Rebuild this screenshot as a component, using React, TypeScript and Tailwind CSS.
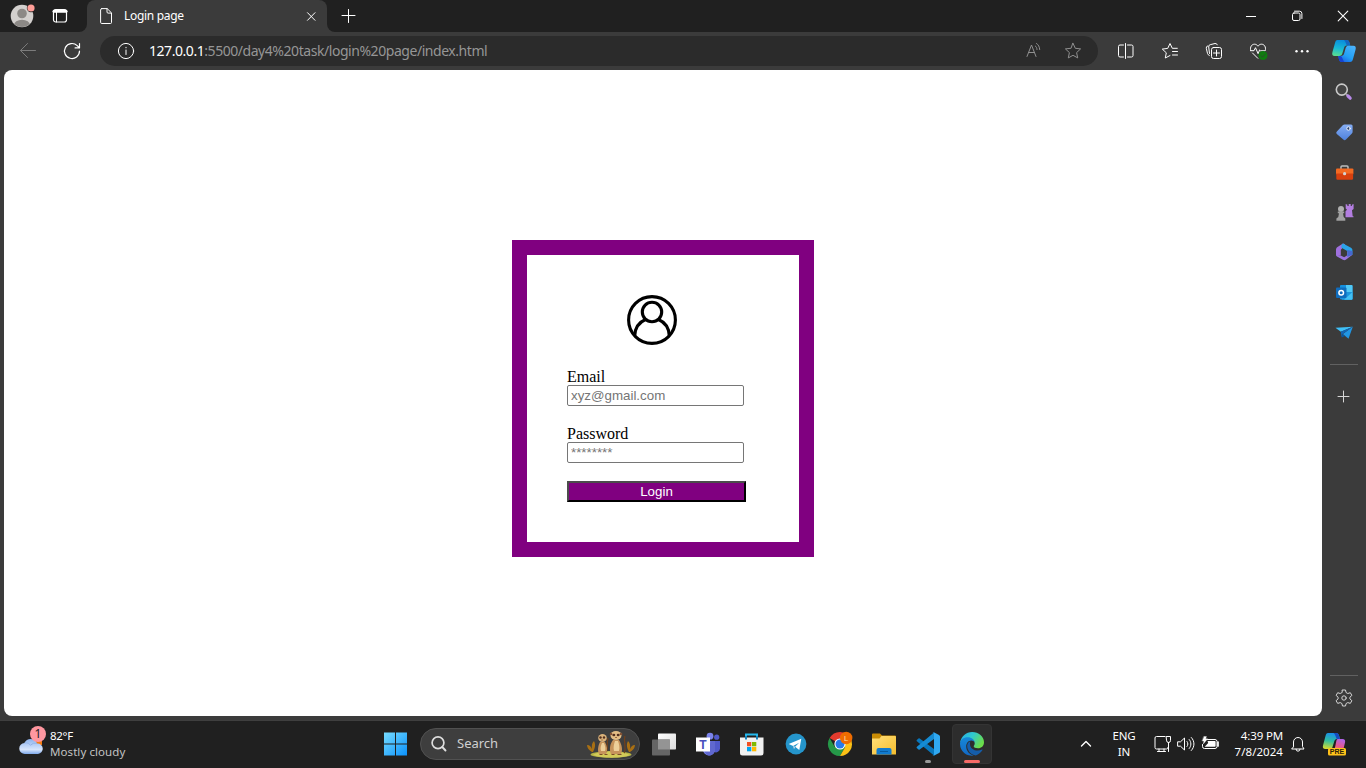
import type { ReactNode } from "react";

type IconProps = { size?: number; className?: string; children: ReactNode };

/* Line icon on a 24 unit grid, drawn at one pixel per unit by default. */
function Icon({ size = 24, className = "", children }: IconProps) {
  return (
    <svg
      width={size}
      height={size}
      viewBox="0 0 24 24"
      fill="none"
      stroke="currentColor"
      strokeWidth="1"
      strokeLinecap="round"
      strokeLinejoin="round"
      className={`block shrink-0 overflow-visible ${className}`}
    >
      {children}
    </svg>
  );
}

function Slot({ children, className = "w-11" }: { children: ReactNode; className?: string }) {
  return <div className={`flex shrink-0 items-center justify-center ${className}`}>{children}</div>;
}

function TitleBar() {
  return (
    <header className="flex h-8 shrink-0 bg-[#202020] text-white">
      <div className="flex w-[79px] shrink-0 items-center pl-[10px]">
        <Icon className="mr-[14px] mt-[-2px]">
          <g stroke="none">
            <clipPath id="avatar"><circle cx="12" cy="13" r="11" /></clipPath>
            <circle cx="12" cy="13" r="11.3" fill="#d3d0ce" />
            <g clipPath="url(#avatar)" fill="#8c8986">
              <circle cx="12" cy="10.5" r="4.8" />
              <ellipse cx="12" cy="22" rx="8" ry="5.3" />
            </g>
            <circle cx="21" cy="5" r="4.2" fill="#202020" />
            <circle cx="21" cy="5" r="3.6" fill="#ff9e98" />
          </g>
        </Icon>
        <Icon>
          <rect x="5.5" y="5.5" width="13" height="12.5" rx="2.2" strokeWidth="1.2" />
          <path d="M6 7.3h12" strokeWidth="3" />
          <path d="M8.5 8v10" />
        </Icon>
      </div>
      <div className="flex w-2 shrink-0 items-end bg-[#3b3b3b]">
        <div className="h-8 w-2 rounded-br-lg bg-[#202020]" />
      </div>
      <div className="shrink-0 bg-[#202020]">
        <div className="flex h-8 w-60 items-center rounded-t-lg bg-[#3b3b3b] pl-[7px]">
          <Icon>
            <path d="M7.8 4.6h5.4l4.3 4.3v9.6a1 1 0 0 1-1 1H7.8a1.2 1.2 0 0 1-1.2-1.2V5.8a1.2 1.2 0 0 1 1.2-1.2Z" />
            <path d="M13 4.8V8a1.1 1.1 0 0 0 1.1 1.1h3.2" />
          </Icon>
          <span className="ml-[6px] w-[175px] whitespace-nowrap font-['Noto_Sans',sans-serif] text-[12px] tracking-[-0.31px]">Login page</span>
          <Icon>
            <path d="m8.5 8.700 7.500 7.600m0-7.600-7.500 7.600" />
          </Icon>
        </div>
      </div>
      <div className="w-2 shrink-0 bg-[#3b3b3b]">
        <div className="h-8 w-2 rounded-bl-lg bg-[#202020]" />
      </div>
      <div className="flex flex-1 items-center pl-px">
        <Icon>
          <path d="M12.500 5.500v13M6 11.500h13" />
        </Icon>
      </div>
      <Slot className="w-[46px]">
        <Icon><path d="M7 12.500h10" strokeLinecap="butt" /></Icon>
      </Slot>
      <Slot className="w-[46px]">
        <Icon>
          <rect x="7.500" y="9" width="7.500" height="7.500" rx="1.500" />
          <path d="M9.500 7.200h5a2.400 2.400 0 0 1 2.400 2.400v4.900" />
        </Icon>
      </Slot>
      <Slot className="w-[46px]">
        <Icon><path d="m7.200 7.200 9.600 9.600m0-9.600-9.600 9.600" strokeWidth="1.100" /></Icon>
      </Slot>
    </header>
  );
}

const star = "m12 4.300 2.300 5 5.300.6-4 3.700 1.100 5.300L12 16.300l-4.700 2.600 1.100-5.300-4-3.700 5.300-.6Z";

function CopilotLogo() {
  return (
    <svg width="26" height="24" viewBox="0 0 26 24" className="block">
      <defs>
        <linearGradient id="cpA" x1="0.3" y1="0" x2="0.1" y2="1">
          <stop stopColor="#0a8fdc" /><stop offset=".5" stopColor="#19b9d4" /><stop offset="1" stopColor="#5fe08a" />
        </linearGradient>
        <linearGradient id="cpB" x1="0.8" y1="0" x2="0.2" y2="1">
          <stop stopColor="#4ab2fb" /><stop offset=".6" stopColor="#22a0f5" /><stop offset="1" stopColor="#1c5fe5" />
        </linearGradient>
      </defs>
      <path d="M6.500 1h9c2 0 2.600 1.200 3 2.700l.8 2.900h-3.500c-1.700 0-2.400 1-2.800 2.400l-1.600 5.300c-.5 1.700-1.400 2.700-3.200 2.700H3.700c-2.300 0-2.900-1.500-2.300-3.700L4 4c.5-2 1-3 2.500-3Z" fill="url(#cpA)" />
      <path d="M13 1h2.500c2 0 2.600 1.200 3 2.700l.8 2.900h-3.500c-1-2-1-4-2.800-5.600Z" fill="#1565c0" />
      <path d="M17 6.800h5.300c2.300 0 2.900 1.500 2.300 3.700L22 20c-.5 2-1.200 3-3 3h-8c-2 0-2.600-1-3-2.500l-.7-3.500h2.500c2 0 2.900-1 3.400-2.700l1.300-4.700c.4-1.400 1-2.800 2.500-2.800Z" fill="url(#cpB)" />
      <path d="M7.300 17h2.500c1 0 2 4 3.700 6H11c-2 0-2.600-1-3-2.500Z" fill="#1743d2" />
    </svg>
  );
}

function Toolbar() {
  return (
    <div className="flex h-[38px] shrink-0 items-center bg-[#3b3b3b] text-white">
      <div className="flex w-[100px] shrink-0 pl-4">
        <Icon className="text-[#7c7c7c]">
          <path d="M4.500 11.500H19.500M11.500 4.500l-7 7 7 7" />
        </Icon>
        <Icon className="ml-5">
          <path d="M19.500 12a7.500 7.500 0 1 1-2.300-5.400l2 2M19.500 4.500v4.400h-4.400" strokeWidth="1.200" />
        </Icon>
      </div>
      <div className="flex h-[30px] w-[998px] shrink-0 items-center rounded-full bg-[#2b2b2b] pl-[14px]">
        <Icon>
          <circle cx="12" cy="12" r="7.600" />
          <path d="M12 11v4.500M12 8.300v.5" />
        </Icon>
        <span className="ml-[11px] mt-[-1px] flex-1 whitespace-nowrap font-['Noto_Sans',sans-serif] text-[14px] tracking-[-0.45px] text-[#969696]">
          <span className="text-white">127.0.0.1</span>:5500/day4%20task/login%20page/index.html
        </span>
        <Icon className="text-[#8f8f8f]">
          <path d="m6 17.500 4.500-11.500L15 17.500M7.500 13.500h6M14.300 7c1 .7 1.600 1.900 1.700 3.500M15.500 4.500c2 1.300 3 3.200 3.200 6" />
        </Icon>
        <Icon className="ml-4 mr-[13px] text-[#8f8f8f]"><path d={star} /></Icon>
      </div>
      <div className="flex pl-[6px]">
        <Slot>
          <Icon>
            <path d="M9.500 6H6a1.500 1.500 0 0 0-1.500 1.500v9A1.500 1.500 0 0 0 6 18h3.500M13.500 6h4A1.500 1.500 0 0 1 19 7.500v9a1.500 1.500 0 0 1-1.500 1.500h-4M11.500 4.500v15" />
          </Icon>
        </Slot>
        <Slot>
          <Icon>
            <path d="M12 16.500 7.300 19l1-5.200-4-3.700 5.400-.7L12 4.500l2.300 4.800h5M14.500 12.500h5M14.500 16h5" />
          </Icon>
        </Slot>
        <Slot>
          <Icon>
            <rect x="9.500" y="8.500" width="10" height="11" rx="2" />
            <path d="M14.500 11v6M11.500 14h6M7.300 16.500A3 3 0 0 1 5.500 14.500L4.300 9.300a2 2 0 0 1 1.400-2.400M7.500 14.500l-.8-6.500a2 2 0 0 1 1.500-2.300l4.800-1.200a2 2 0 0 1 2.300 1.300" />
          </Icon>
        </Slot>
        <Slot>
          <Icon>
            <path d="M4.700 11.500c-1-3.500 1-6.300 3.800-6.300 1.600 0 2.700.9 3.500 2 .8-1.100 1.900-2 3.500-2 2.800 0 4.800 2.800 3.800 6.300M4.500 11.700H8l1.500-3 2.600 6 1.500-3.800 1 .9h4M6.500 14l5.300 5.300" />
            <circle cx="17" cy="16.500" r="4.500" fill="#107c10" stroke="none" />
            <path d="m15 16.700 1.500 1.400 2.700-3" stroke="#2f4b2f" strokeWidth="1" />
          </Icon>
        </Slot>
        <Slot>
          <Icon>
            <g fill="currentColor" stroke="none"><circle cx="6.500" cy="12.300" r="1.200" /><circle cx="12" cy="12.300" r="1.200" /><circle cx="17.500" cy="12.300" r="1.200" /></g>
          </Icon>
        </Slot>
        <Slot className="w-10"><CopilotLogo /></Slot>
      </div>
    </div>
  );
}

function LoginCard() {
  return (
    <form className="mt-[170px] h-[317px] w-[302px] border-[15px] border-[#800080] bg-white p-10 text-black">
      <svg width="50" height="50" viewBox="0 0 50 50" fill="none" stroke="#000" strokeWidth="3.100" className="ml-[60px] block">
        <circle cx="25" cy="25" r="23.400" />
        <circle cx="25" cy="17" r="9.700" />
        <path d="M7.700 41c.2-8 3.800-13.500 10.800-16.500M42.300 41c-.2-8-3.800-13.500-10.800-16.500" />
      </svg>
      <div className="mt-[22px] flex flex-col font-['Liberation_Serif',serif] text-[16px] leading-[18px]">
        <label htmlFor="email" className="h-[18px] leading-[19px]">Email</label>
        <input
          id="email"
          type="text"
          placeholder="xyz@gmail.com"
          className="h-[21px] w-[177px] rounded-[2px] border border-[#767676] px-[3px] font-['Liberation_Sans',sans-serif] text-[13.333px] leading-[15px] placeholder:text-[#757575]"
        />
        <label htmlFor="password" className="mt-[18px] h-[18px] leading-[19px]">Password</label>
        <input
          id="password"
          type="password"
          placeholder="********"
          className="h-[21px] w-[177px] rounded-[2px] border border-[#767676] px-[3px] pb-px font-['Liberation_Sans',sans-serif] text-[13.333px] leading-[15px] placeholder:text-[#757575]"
        />
        <button
          type="button"
          className="mt-[18px] h-[21px] w-[179px] border-2 border-b-black border-l-[#4c4c4c] border-r-black border-t-[#4c4c4c] bg-[#800080] text-center font-['Liberation_Sans',sans-serif] text-[13.333px] leading-[17px] text-white"
        >
          Login
        </button>
      </div>
    </form>
  );
}

function Sidebar() {
  return (
    <aside className="flex w-11 shrink-0 flex-col items-center bg-[#3b3b3b] pt-[2px] text-[#d6d6d6]">
      <Slot className="h-10">
        <Icon>
          <circle cx="9.800" cy="9.600" r="5.500" stroke="#c9c9c9" strokeWidth="1.600" fill="#444" />
          <path d="m14.500 14.500 1.500 1.500" stroke="#a4a4a4" strokeWidth="1.800" />
          <path d="m16 16 2.200 2.200" stroke="#b78ae8" strokeWidth="3.200" />
        </Icon>
      </Slot>
      <Slot className="h-10">
        <Icon>
          <defs><linearGradient id="tag" x1="0" y1="0" x2="0" y2="1"><stop stopColor="#85adf3" /><stop offset="1" stopColor="#4f82dd" /></linearGradient></defs>
          <path d="M12.500 4.500h6.600a1.500 1.500 0 0 1 1.500 1.500v6.100c0 .6-.3 1-.7 1.400L14 19.500a1.900 1.900 0 0 1-2.700 0l-6.500-5.400a1.700 1.700 0 0 1 .1-2.500L11 5.100c.4-.4.900-.6 1.500-.6Z" fill="url(#tag)" stroke="none" />
          <circle cx="16.500" cy="8.500" r="1.700" fill="#253e70" stroke="#fff" strokeWidth=".9" />
        </Icon>
      </Slot>
      <Slot className="h-10">
        <Icon>
          <path d="M9 8.500V7a1 1 0 0 1 1-1h5a1 1 0 0 1 1 1v1.500" stroke="#bdbdbd" strokeWidth="1.500" />
          <g stroke="none">
            <rect x="4" y="8.500" width="17.400" height="6" rx="1" fill="#f36a22" />
            <path d="M4.300 13.500h16.800V18.500a1.200 1.200 0 0 1-1.200 1.200H5.500a1.200 1.200 0 0 1-1.200-1.200Z" fill="#d8400e" />
            <circle cx="12.600" cy="13.700" r="1.600" fill="#d5d5d5" />
          </g>
        </Icon>
      </Slot>
      <Slot className="h-10">
        <Icon>
          <g stroke="none">
            <path d="m13.700 4 1.700.7V6h1.300V4h2v2h1.200V4.700l1.700-.7v5l-1.600 1.200.7 6h.8v1h-8v-6l1.500-1.500-1.300-1.200Z" fill="#b37ee0" />
            <circle cx="9" cy="9" r="3" fill="#b0b0b0" />
            <path d="M5.800 11.500h6.400v1.700H11l.7 3.800 1.600 1.500v2.200H4.400v-2.200L6.300 17l.7-3.800H5.800Z" fill="#a0a0a0" />
          </g>
        </Icon>
      </Slot>
      <Slot className="h-10">
        <Icon>
          <g stroke="none">
            <path d="M11 3.500 5.500 7C4.500 7.700 4 8.600 4 9.800v5c1 1.200 3 1.600 4.800.7V10l4.400-5.800Z" fill="#a070de" />
            <path d="m11 3.500 8 4.300c.8.500 1.400 1.300 1.400 2.300v4.700l-5.100 2.200v-6L9.500 7.700c-.5-1.500.2-3.500 1.500-4.200Z" fill="#2aa4e9" />
            <path d="m20.400 14.800-6.600 5c-.9.600-2 .6-2.900 0L5 16.500c-1-.7-1-1.200-1-2 1.500 1.500 3 1.700 4.800 1l3.400 1.700 3.100-2v-3.500c3 .7 4 1.600 5.100 3.100Z" fill="#9a74e0" />
            <path d="m15.300 10 5.100 1v3.800l-5.100 2.200Z" fill="#4668cf" />
          </g>
        </Icon>
      </Slot>
      <Slot className="h-10">
        <Icon>
          <g stroke="none">
            <rect x="8" y="5" width="12.500" height="14.500" rx="1" fill="#1490df" />
            <path d="M14 5h5.500a1 1 0 0 1 1 1v6H14Z" fill="#50c8f5" />
            <path d="M10 12h10.500v6.800a1 1 0 0 1-1 1H10Z" fill="#1c95dc" />
            <path d="m20.500 12-8.500 7.800h7.500a1 1 0 0 0 1-1Z" fill="#42c0f3" />
            <rect x="4" y="7.500" width="10.500" height="10.500" rx="1" fill="#0f6cbd" />
          </g>
          <circle cx="9.200" cy="12.700" r="2.300" stroke="#fff" strokeWidth="1.500" />
        </Icon>
      </Slot>
      <Slot className="h-10">
        <Icon>
          <g stroke="none">
            <path d="m3.500 7.700 17.300-.9-12 5Z" fill="#3fc0f8" />
            <path d="m20.800 6.800-4.300 12-5.700-4.800Z" fill="#2196e3" />
            <path d="M8.800 11.800 20.800 6.800 10.500 14l-.8 3.500Z" fill="#1166b8" />
            <path d="m10.500 14 2.500 1.900-3.300 1.600Z" fill="#0758a4" />
          </g>
        </Icon>
      </Slot>
      <div className="mt-3 h-px w-7 shrink-0 bg-[#616161]" />
      <Slot className="mt-3 h-10">
        <Icon><path d="M11.500 6v11M6 11.500h11" /></Icon>
      </Slot>
      <div className="mt-auto h-px w-7 shrink-0 bg-[#616161]" />
      <Slot className="h-[44px]">
        <Icon>
          <path d="M10.500 4h3l.6 2.600 1.700.9 2.500-.8 1.600 2.700-2 1.800v1.700l2 1.800-1.600 2.700-2.500-.8-1.700.9-.6 2.500h-3l-.6-2.500-1.700-.9-2.500.8-1.600-2.700 2-1.800v-1.700l-2-1.800 1.600-2.700 2.500.8 1.700-.9Z" />
          <circle cx="12" cy="12" r="2.200" />
        </Icon>
      </Slot>
    </aside>
  );
}

function Meerkats() {
  return (
    <svg width="50" height="28" viewBox="0 0 50 28" className="block">
      <ellipse cx="25" cy="24.500" rx="20.500" ry="3.300" fill="#b6b545" />
      <path d="M7 25c8-5 26-5 37 0-8 3.500-28 3.500-37 0Z" fill="#d2ca59" />
      <path d="M6 22C3 20 1 18 1 15c3 0 4 2 5 4-.5-4 0-6 2-8 2 4 1 7-1 11ZM44 22c3-2 5-4 5-7-3 0-4 2-5 4 .5-4 0-6-2-8-2 4-1 7 1 11Z" fill="#a86f13" />
      <path d="M20 22c3-3 0-9 2-14M38 23c3-4-1-12 1-17" stroke="#70411d" strokeWidth="1.300" fill="none" />
      <path d="M13 24c-2-4-.5-9 1-12h5c2 4 3 8 1 12ZM25 24c-2-5-1-10 2-14h6c3 5 4 10 2 14Z" fill="#c6935b" />
      <path d="M15 21c-1-3 0-6 1-8h2c1 3 2 5 1 8ZM28 21c-1-4 0-7 1-10h3c1 3 2 6 1 10Z" fill="#edcf99" />
      <ellipse cx="16.500" cy="8" rx="4.300" ry="4" fill="#dab27b" />
      <ellipse cx="30" cy="5.500" rx="5.500" ry="4.500" fill="#e3bd85" />
      <circle cx="25" cy="4" r="1.300" fill="#845234" /><circle cx="35" cy="4" r="1.300" fill="#845234" />
      <ellipse cx="27.800" cy="5" rx="1.500" ry="1.200" fill="#53301f" /><ellipse cx="32.200" cy="5" rx="1.500" ry="1.200" fill="#53301f" />
      <circle cx="14.500" cy="7.500" r="1.200" fill="#53301f" /><circle cx="18" cy="7.500" r="1.200" fill="#53301f" />
      <path d="M29.300 7.500h1.500M15.500 10h1M13.500 24.500h3m2 0h3M25.500 24.500h3m3 0h4" stroke="#7c4d28" strokeWidth="1.200" />
    </svg>
  );
}

function TaskbarApps() {
  return (
    <>
      <Slot>
        <Icon>
          <defs>
            <linearGradient id="tvA" x1="0" y1="0" x2="1" y2="1"><stop stopColor="#fff" /><stop offset="1" stopColor="#dcdcdc" /></linearGradient>
          </defs>
          <g stroke="none">
            <rect x="6" y="1.500" width="18" height="16" rx=".8" fill="url(#tvA)" />
            <rect x="0" y="7.500" width="18" height="16" rx=".8" fill="#656565" />
            <path d="M6 7.500h12v10H6Z" fill="#949494" />
          </g>
        </Icon>
      </Slot>
      <Slot>
        <Icon>
          <g stroke="none">
            <circle cx="14" cy="4.200" r="3.400" fill="#7b83eb" />
            <circle cx="20.700" cy="5.200" r="2.600" fill="#5059c9" />
            <path d="M16 9h8v7.500a4 4 0 0 1-6 3.300Z" fill="#5059c9" />
            <path d="M9 9h10v8.500a6 6 0 0 1-12 0V14Z" fill="#7b83eb" />
            <path d="M13 18h-5c1 3.500 3 5.500 5.500 5.500 2 0 5-1.500 5.500-5.500V9h-4.500Z" fill="#6068cf" />
            <rect x="0" y="5.500" width="14" height="14" fill="#fff" />
            <text x="7" y="16.500" textAnchor="middle" fontFamily="Liberation Sans, sans-serif" fontWeight="700" fontSize="12" fill="#474fbd">T</text>
          </g>
        </Icon>
      </Slot>
      <Slot>
        <Icon>
          <path d="M6 6V2.500h11V6" stroke="#24b9ee" strokeWidth="2" strokeLinecap="butt" strokeLinejoin="miter" />
          <g stroke="none">
            <path d="M0 5.500h23.500V21a2.500 2.500 0 0 1-2.500 2.500H2.500A2.500 2.500 0 0 1 0 21Z" fill="#f1f1f1" />
            <path d="M5 7.500h2V4H5ZM16 7.500h2V4h-2Z" fill="#1683bb" />
            <path d="M7 10h4.300v4.300H7Z" fill="#f25022" /><path d="M12 10h4.300v4.300H12Z" fill="#7fba00" />
            <path d="M7 15h4.300v4.300H7Z" fill="#00a4ef" /><path d="M12 15h4.300v4.300H12Z" fill="#ffb900" />
          </g>
        </Icon>
      </Slot>
      <Slot>
        <Icon>
          <g stroke="none">
            <circle cx="12" cy="12" r="10.400" fill="#2595cb" />
            <path d="m4.700 12 12.600-5.200-2 11.200-4.200-3.200 4-4-6 3.200Z" fill="#fff" />
            <path d="m9 13.900 1 3.300 1.300-2.500Z" fill="#c8daea" />
          </g>
        </Icon>
      </Slot>
      <Slot>
        <Icon>
          <g stroke="none">
            <path d="M12 12 1.600 6A12 12 0 0 1 22.400 6Z" fill="#e33b2e" />
            <path d="M12 12 6.800 15 1.600 6a12 12 0 0 0 10.400 18l5.200-9Z" fill="#259848" />
            <path d="M12 6.500h10.700A12 12 0 0 1 12 24l5.200-9Z" fill="#fbc116" />
            <circle cx="12" cy="12" r="5.600" fill="#fff" /><circle cx="12" cy="12" r="4.500" fill="#277bea" />
            <circle cx="18.200" cy="6" r="6.200" fill="#ef6c00" />
            <text x="18.200" y="8.800" textAnchor="middle" fontFamily="Liberation Sans, sans-serif" fontSize="7.500" fill="#ffe0b4">L</text>
          </g>
        </Icon>
      </Slot>
      <Slot>
        <Icon>
          <defs><linearGradient id="fold" x1="0" y1="0" x2="1" y2="1"><stop stopColor="#ffdf7b" /><stop offset="1" stopColor="#f4bd2d" /></linearGradient></defs>
          <g stroke="none">
            <path d="M0 2.500A1 1 0 0 1 1 1.500h7l2 2h13a1 1 0 0 1 1 1V9H0Z" fill="#c98c05" />
            <path d="M0 6.500h7.500l2-2.500H23a1 1 0 0 1 1 1v17.500H0Z" fill="url(#fold)" />
            <path d="M4.500 18a2 2 0 0 1 2-2h11a2 2 0 0 1 2 2v4.500h-15Z" fill="#117bcf" />
            <path d="M8 19h8v1H8Z" fill="#075a9f" />
          </g>
        </Icon>
      </Slot>
      <Slot className="relative h-full w-11">
        <Icon>
          <g stroke="none">
            <path d="M1 7.700 2.500 6.400c.4-.3.800-.3 1.200 0L18 17v6.500L.9 9.300c-.5-.5-.4-1.100.1-1.600Z" fill="#0877bd" />
            <path d="M1 16.300l1.500 1.300c.4.300.8.300 1.200 0L18 7V.5L.9 14.700c-.5.500-.4 1.100.1 1.600Z" fill="#168bd2" />
            <path d="M16.500.7c.6-.5 1.200-.4 1.800-.1L23 3c.6.300 1 .9 1 1.600v14.800c0 .7-.4 1.300-1 1.600l-4.700 2.400c-.7.300-1.300.2-1.800-.2.800.4 1.500 0 1.500-.9V1.700c0-.9-.8-1.500-1.500-1Z" fill="#30a9f2" />
          </g>
        </Icon>
        <span className="absolute bottom-[3px] left-[19px] h-[3px] w-[6px] rounded-full bg-[#999]" />
      </Slot>
      <div className="relative ml-[2px] flex h-10 w-10 shrink-0 items-center justify-center rounded-[4px] border border-[#343434] bg-[#2d2d2d]">
        <Icon>
          <defs>
            <linearGradient id="edA" x1="0" y1="0" x2="1" y2=".5"><stop stopColor="#25a9e8" /><stop offset=".5" stopColor="#30c9cf" /><stop offset="1" stopColor="#6bdd4b" /></linearGradient>
            <linearGradient id="edB" x1="0" y1="0" x2="0" y2="1"><stop stopColor="#1688d8" /><stop offset="1" stopColor="#1268c4" /></linearGradient>
          </defs>
          <g stroke="none">
            <path d="M.2 10.500C1.200 4.300 6 0 12.200 0 18.700 0 24 4.500 24 10.200c0 3.700-2.600 6-6 6-2.700 0-4.300-1-4.300-2 0-.7 1-1.200 1-3 0-2.200-2-4.200-5.300-4.200C5.500 7 2 8.500.2 10.500Z" fill="url(#edA)" />
            <path d="M0 12c0-4 3.500-6.700 7.700-6.700 4 0 7 2.500 7 5.500-.5-1.500-2-2.300-3.500-2.300-3 0-5 2.800-5 6 0 4 3 8 7.500 9.200A12 12 0 0 1 0 12Z" fill="url(#edB)" />
            <path d="M10.300 9.200c-2.500 1-3.600 3.400-3 6.300.8 4 4 7.500 8.500 7.900 2.800-.8 5.200-2.700 6.700-5.300.2-.4-.1-.7-.5-.5-5.500 2.600-12-.3-12-5.700 0-1 .1-1.900.3-2.700Z" fill="#145daa" />
          </g>
        </Icon>
        <span className="absolute bottom-0 left-[11px] h-[3px] w-4 rounded-full bg-[#f66a67]" />
      </div>
    </>
  );
}

function Taskbar() {
  return (
    <footer className="flex h-12 shrink-0 items-center border-t border-[#3f3f3f] bg-[#202020] pb-[2px] font-['Noto_Sans',sans-serif] text-white">
      <div className="flex h-full w-[374px] shrink-0 items-center pl-[17px]">
        <svg width="30" height="32" viewBox="0 0 30 32" className="mt-[-7px] block shrink-0">
          <defs><linearGradient id="cloud" x1="0" y1="0" x2="0" y2="1"><stop stopColor="#8eb4ef" /><stop offset=".7" stopColor="#d7e5fc" /><stop offset="1" stopColor="#7da8ea" /></linearGradient></defs>
          <path d="M18 14h7v7h-7Z" fill="#f47b13" />
          <path d="M8 30a5.500 5.500 0 0 1-.5-11C8.500 16.500 11 15 13.500 15c3.200 0 5.500 1.600 6.500 4.500a5.200 5.200 0 0 1 1 10.500Z" fill="url(#cloud)" />
          <path d="M7.500 19c3-.6 5 .4 6 2.500M14 21c1-1.500 3.500-2.300 6-1.500" fill="none" stroke="#94b4e8" />
          <circle cx="21" cy="10" r="8" fill="#ff97a0" />
          <text x="21" y="14" textAnchor="middle" fontFamily="Noto Sans, sans-serif" fontSize="12" fill="#222">1</text>
        </svg>
        <div className="ml-[3px] whitespace-nowrap text-[11.500px] leading-4 tracking-[0.080px]">
          <div className="tracking-[-0.300px]">82°F</div>
          <div className="text-[#c3c3c3]">Mostly cloudy</div>
        </div>
      </div>
      <Slot>
        <Icon>
          <defs><linearGradient id="win" x1="0" y1="0" x2="1" y2="1"><stop stopColor="#76dcff" /><stop offset="1" stopColor="#0a91fc" /></linearGradient></defs>
          <path d="M0 .5h11v11H0ZM12 .5h11v11H12ZM0 12.500h11v11H0ZM12 12.500h11v11H12Z" fill="url(#win)" stroke="none" />
        </Icon>
      </Slot>
      <div className="ml-[2px] mr-[2px] flex h-8 w-[220px] shrink-0 items-center rounded-full border border-[#515151] bg-[#3e3e3e] pl-[6px] pr-[3px]">
        <Icon className="text-[#dedede]">
          <circle cx="11" cy="10.700" r="5.900" strokeWidth="1.700" />
          <path d="m15.300 15 3.200 3.500" strokeWidth="1.900" />
        </Icon>
        <span className="ml-[6px] flex-1 text-[13px] text-[#d0d0d0]">Search</span>
        <Meerkats />
      </div>
      <TaskbarApps />
      <div className="ml-auto flex h-full items-center">
        <Icon><path d="m7.500 14 4.500-4.500 4.500 4.500" strokeWidth="1.400" /></Icon>
        <div className="ml-[10px] w-8 text-center text-[11.500px] leading-4 tracking-[-0.100px]">
          <div>ENG</div>
          <div>IN</div>
        </div>
        <Icon className="ml-[11px] mr-[-1px]">
          <path d="M14 4.500H5.500A1.500 1.500 0 0 0 4 6v9.500A1.500 1.500 0 0 0 5.500 17h10a1.500 1.500 0 0 0 1.500-1.500M8 17v2.500M13 17v2.500M6.500 19.500h8M15.500 4.500h4v4a2 2 0 0 1-4 0ZM17.500 10.500v9" />
        </Icon>
        <Icon>
          <path d="M4 9.800h2.500L10.500 6v12l-4-3.800H4ZM13 9.500c1.200 1.500 1.200 3.500 0 5M15.200 7.500c2.300 2.600 2.300 6.400 0 9M17.300 5.500c3.600 3.700 3.600 9.300 0 13" />
        </Icon>
        <Icon>
          <path d="M9.500 7.500H17a2 2 0 0 1 2 2v5a2 2 0 0 1-2 2H6.500a2 2 0 0 1-2-2v-2" />
          <path d="M9.500 9h7.300c.5 0 .8.300.8.800v4.200c0 .5-.3.800-.8.800H6.700l3.500-3.800Z" fill="currentColor" stroke="none" />
          <path d="M20 10v4" strokeWidth="1.700" />
          <path d="M6 4.500h2.500l-.8 2.300h2L5.300 12l.6-3H4.300Z" fill="currentColor" strokeWidth=".3" />
        </Icon>
        <div className="w-[61px] whitespace-nowrap text-right text-[11.500px] leading-4 tracking-[0.050px]">
          <div className="tracking-[-0.150px]">4:39 PM</div>
          <div>7/8/2024</div>
        </div>
        <Icon className="ml-[3px]">
          <path d="M7.500 14.500V10a4.500 4.500 0 0 1 9 0v4.500L18 17H6ZM10 17.200a2 2 0 0 0 4 0" />
        </Icon>
        <svg width="26" height="26" viewBox="0 0 26 26" className="ml-[11px] mr-[19px] block">
          <defs>
            <linearGradient id="pcA" x1=".5" y1="0" x2=".3" y2="1"><stop stopColor="#188eed" /><stop offset=".5" stopColor="#31bd9e" /><stop offset="1" stopColor="#d5da30" /></linearGradient>
            <linearGradient id="pcB" x1=".7" y1="0" x2=".3" y2="1"><stop stopColor="#b064e8" /><stop offset=".6" stopColor="#e9588b" /><stop offset="1" stopColor="#f59b4a" /></linearGradient>
          </defs>
          <path d="M7 2h8c2 0 2.500 1 3 2.500L19 8h-3c-1.700 0-2.300 1-2.700 2.300L11.500 16c-.4 1.400-1 2-2.500 2H4.500C2 18 1.500 16.500 2 14.500L4.500 5C5 3 5.500 2 7 2Z" fill="url(#pcA)" />
          <path d="M12.500 2H15c2 0 2.500 1 3 2.500L19 8h-3c-1.500-1.500-1-4-3.500-6Z" fill="#174bbf" />
          <path d="M17 8h4.500c2.300 0 3 1.500 2.500 3.500L22 20H10.500c2-.5 3-2 3.500-3.500l1-5C15.500 9.500 15.500 8 17 8Z" fill="url(#pcB)" />
          <rect x="7" y="17" width="18" height="7.500" rx="1.500" fill="#ffc21a" />
          <text x="16" y="23.300" textAnchor="middle" fontFamily="Liberation Sans, sans-serif" fontWeight="700" fontSize="7" fill="#2b2109">PRE</text>
        </svg>
      </div>
    </footer>
  );
}

export default function App() {
  return (
    <div className="flex h-[768px] w-[1366px] flex-col overflow-hidden bg-[#3b3b3b]">
      <TitleBar />
      <Toolbar />
      <div className="flex h-[650px] shrink-0">
        <main className="mb-1 ml-1 flex w-[1318px] shrink-0 rounded-lg bg-white pl-[508px]">
          <LoginCard />
        </main>
        <Sidebar />
      </div>
      <Taskbar />
    </div>
  );
}
